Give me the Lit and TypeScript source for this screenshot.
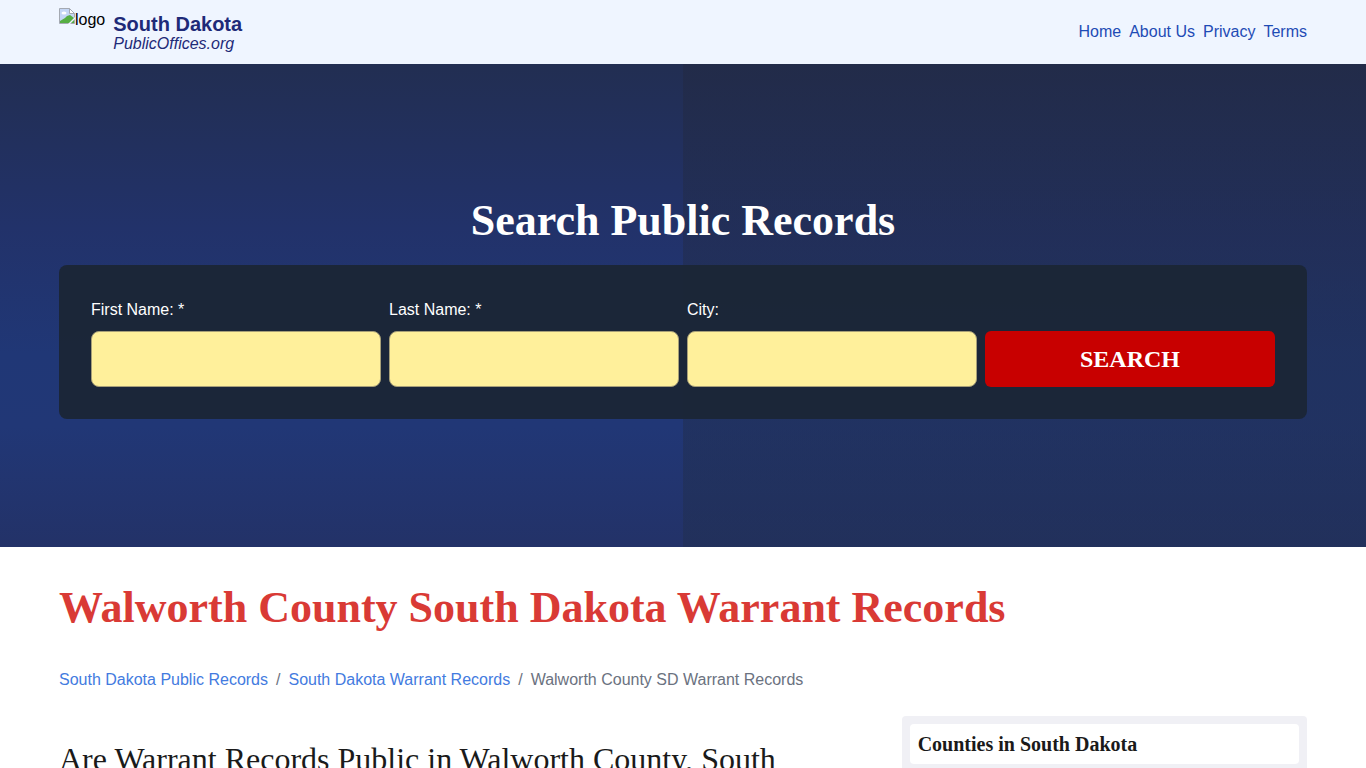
import { LitElement, html, css } from "lit";
import { customElement } from "lit/decorators.js";

interface Field {
  id: string;
  label: string;
  required: boolean;
}

@customElement("app-root")
export class AppRoot extends LitElement {
  static styles = css`
    :host {
      display: block;
      color: #1a1a1a;
      background: #fff;
      font: 16px/24px "Liberation Sans", Arial, sans-serif;
    }
    *,
    *::before,
    *::after {
      box-sizing: border-box;
    }
    a {
      color: inherit;
      text-decoration: none;
    }
    h1,
    h2,
    h3,
    .submit {
      margin: 0;
      font-family: "Liberation Serif", "Times New Roman", serif;
    }
    .container {
      max-width: 1280px;
      margin: 0 auto;
      padding: 0 16px;
    }
    .topbar {
      background: #eff5ff;
    }
    .bar {
      display: flex;
      align-items: center;
      justify-content: space-between;
      min-height: 64px;
    }
    .brand {
      display: flex;
      gap: 8px;
      color: #1e2a78;
    }
    .logo {
      display: flex;
      align-items: flex-start;
      height: 48px;
      color: #000;
    }
    .brand-text {
      display: flex;
      flex-direction: column;
      justify-content: center;
      padding-top: 4px;
      line-height: 20px;
    }
    .brand-name {
      font-size: 20px;
      font-weight: 700;
    }
    .brand-site {
      font-style: italic;
    }
    .nav {
      display: flex;
      gap: 8px;
      color: #1e4bb5;
    }
    .hero {
      padding: 128px 0;
      background:
        linear-gradient(rgba(34, 40, 62, 0.45), rgba(32, 46, 76, 0.45)) right / 50% 100% no-repeat,
        linear-gradient(#222e52 0%, #22326a 34%, #203776 60%, #213776 75%, #233268 100%);
    }
    .title {
      padding-bottom: 15px;
      color: #fff;
      font-size: 44px;
      line-height: 58px;
      text-align: center;
    }
    .search {
      display: grid;
      grid-template-columns: repeat(4, minmax(0, 1fr));
      align-items: end;
      gap: 8px;
      padding: 32px;
      border-radius: 8px;
      background: rgba(27, 37, 54, 0.96);
      color: #fff;
    }
    .field {
      display: flex;
      flex-direction: column;
      gap: 8px;
      line-height: 26px;
    }
    .input {
      width: 100%;
      height: 56px;
      padding: 8px 16px;
      border: 1px solid #a79f78;
      border-radius: 8px;
      background: #fff09b;
      font: inherit;
    }
    .submit {
      height: 56px;
      border: 0;
      border-radius: 6px;
      background: #c80000;
      color: #fff;
      font-size: 24px;
      font-weight: 700;
    }
    .heading {
      padding: 32px 0 31px;
      color: #d93a35;
      font-size: 44px;
      line-height: 58px;
    }
    .crumbs {
      display: flex;
      flex-wrap: wrap;
      gap: 8px;
      margin: 0;
      padding: 0;
      list-style: none;
      color: #6b7280;
    }
    .crumb {
      display: flex;
      gap: 8px;
    }
    .crumb + .crumb::before {
      content: "/";
    }
    .crumb-link {
      color: #437be0;
    }
    .columns {
      display: grid;
      grid-template-columns: minmax(0, 2fr) minmax(0, 1fr);
      align-items: start;
      column-gap: 32px;
      padding-top: 24px;
    }
    .question {
      padding: 24px 0;
      font-size: 32px;
      font-weight: 400;
      line-height: 38px;
    }
    .sidebar {
      padding: 8px;
      border-radius: 4px;
      background: #f0f0f5;
    }
    .sidebar-title {
      padding: 8px;
      border-radius: 4px;
      background: #fff;
      font-size: 20px;
      line-height: 24px;
    }
  `;

  private fields: Field[] = [
    { id: "first-name", label: "First Name:", required: true },
    { id: "last-name", label: "Last Name:", required: true },
    { id: "city", label: "City:", required: false },
  ];

  render() {
    return html`
      <header class="topbar">
        <div class="container bar">
          <a class="brand" href="#">
            <span class="logo">
              <svg width="16" height="16" viewBox="0 0 16 16" aria-hidden="true">
                <path d="M.5.5h10l5 5v10H.5z" fill="#c4d6f5" />
                <ellipse cx="5" cy="5" rx="2.5" ry="1.5" fill="#fff" />
                <path d="M1 15v-2l5-3 2-2 3-1 4 3v5z" fill="#56ae43" />
                <path d="M.5 15.5V.5h10l5 5v10z" fill="none" stroke="#a4a9b2" />
                <path d="M10.5.5v5h5z" fill="#fff" stroke="#a4a9b2" />
                <path d="M16 9v2l-5 5H9z" fill="#eff5ff" />
              </svg>
              <span>logo</span>
            </span>
            <span class="brand-text">
              <span class="brand-name">South Dakota</span>
              <span class="brand-site">PublicOffices.org</span>
            </span>
          </a>
          <nav class="nav">
            ${["Home", "About Us", "Privacy", "Terms"].map((t) => html`<a href="#">${t}</a>`)}
          </nav>
        </div>
      </header>

      <section class="hero">
        <div class="container">
          <h2 class="title">Search Public Records</h2>
          <form class="search" @submit=${(e: Event) => e.preventDefault()}>
            ${this.fields.map(
              (f) => html`<div class="field">
                <label for=${f.id}>${f.label}${f.required ? " *" : ""}</label>
                <input class="input" type="text" id=${f.id} ?required=${f.required} />
              </div>`
            )}
            <button class="submit" type="submit">SEARCH</button>
          </form>
        </div>
      </section>

      <main class="container">
        <h1 class="heading">Walworth County South Dakota Warrant Records</h1>
        <nav aria-label="Breadcrumb">
          <ol class="crumbs">
            <li class="crumb"><a class="crumb-link" href="#">South Dakota Public Records</a></li>
            <li class="crumb"><a class="crumb-link" href="#">South Dakota Warrant Records</a></li>
            <li class="crumb">Walworth County SD Warrant Records</li>
          </ol>
        </nav>
        <div class="columns">
          <article>
            <h2 class="question">Are Warrant Records Public in Walworth County, South Dakota?</h2>
          </article>
          <aside class="sidebar">
            <h3 class="sidebar-title">Counties in South Dakota</h3>
          </aside>
        </div>
      </main>
    `;
  }
}
